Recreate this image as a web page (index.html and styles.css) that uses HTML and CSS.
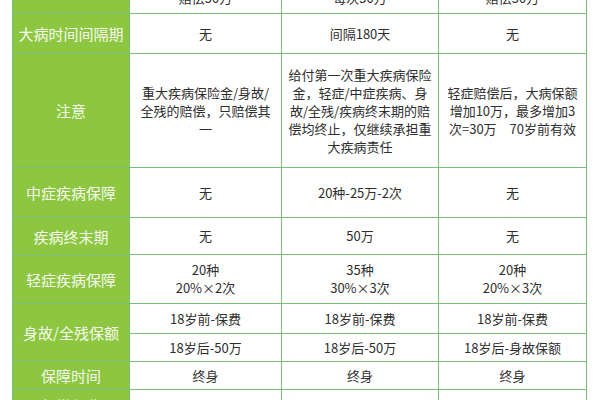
FILE: index.html
```html
<!DOCTYPE html>
<html lang="zh">
<head>
<meta charset="utf-8">
<link rel="stylesheet" href="styles.css">
</head>
<body>
<div class="page">
  <div class="grid">
    <div class="lab r1"></div>
    <div class="cell">赔偿50万</div>
    <div class="cell">每次50万</div>
    <div class="cell">赔偿50万</div>

    <div class="lab">大病时间间隔期</div>
    <div class="cell">无</div>
    <div class="cell">间隔180天</div>
    <div class="cell">无</div>

    <div class="lab">注意</div>
    <div class="cell">重大疾病保险金/身故/<br>全残的赔偿，只赔偿其<br>一</div>
    <div class="cell">给付第一次重大疾病保险<br>金，轻症/中症疾病、身<br>故/全残/疾病终末期的赔<br>偿均终止，仅继续承担重<br>大疾病责任</div>
    <div class="cell">轻症赔偿后，大病保额<br>增加10万，最多增加3<br>次=30万　70岁前有效</div>

    <div class="lab">中症疾病保障</div>
    <div class="cell">无</div>
    <div class="cell">20种-25万-2次</div>
    <div class="cell">无</div>

    <div class="lab">疾病终末期</div>
    <div class="cell">无</div>
    <div class="cell">50万</div>
    <div class="cell">无</div>

    <div class="lab">轻症疾病保障</div>
    <div class="cell">20种<br>20%×2次</div>
    <div class="cell">35种<br>30%×3次</div>
    <div class="cell">20种<br>20%×3次</div>

    <div class="lab span2">身故/全残保额</div>
    <div class="cell">18岁前-保费</div>
    <div class="cell">18岁前-保费</div>
    <div class="cell">18岁前-保费</div>
    <div class="cell">18岁后-50万</div>
    <div class="cell">18岁后-50万</div>
    <div class="cell">18岁后-身故保额</div>

    <div class="lab">保障时间</div>
    <div class="cell">终身</div>
    <div class="cell">终身</div>
    <div class="cell">终身</div>

    <div class="lab">年缴保费</div>
    <div class="cell">14996</div>
    <div class="cell">16886</div>
    <div class="cell">15686.45</div>
  </div>
</div>
</body>
</html>
```
FILE: styles.css
```css
html, body {
  margin: 0;
  padding: 0;
  background: #ffffff;
}
.page {
  width: 600px;
  height: 400px;
  overflow: hidden;
  padding-left: 12px;
  box-sizing: border-box;
}
.grid {
  margin-top: -18px;
  display: grid;
  grid-template-columns: 116px 151px 156px 147px;
  grid-template-rows: 30px 39px 113px 49px 36px 48px 29px 27px 27px 30px;
  gap: 1px;
  padding: 1px;
  width: 575px;
  box-sizing: border-box;
  background: #78bf7a;
  font-family: "Noto Sans CJK SC", "Noto Sans", sans-serif;
}
.lab {
  background: #8dc641;
  color: #f4fbec;
  font-size: 15px;
  display: flex;
  align-items: center;
  justify-content: center;
}
.span2 {
  grid-row: span 2;
}
.cell {
  background: #ffffff;
  color: #2e2e2e;
  font-size: 13px;
  line-height: 18px;
  display: flex;
  align-items: center;
  justify-content: center;
  text-align: center;
  white-space: nowrap;
}
```
